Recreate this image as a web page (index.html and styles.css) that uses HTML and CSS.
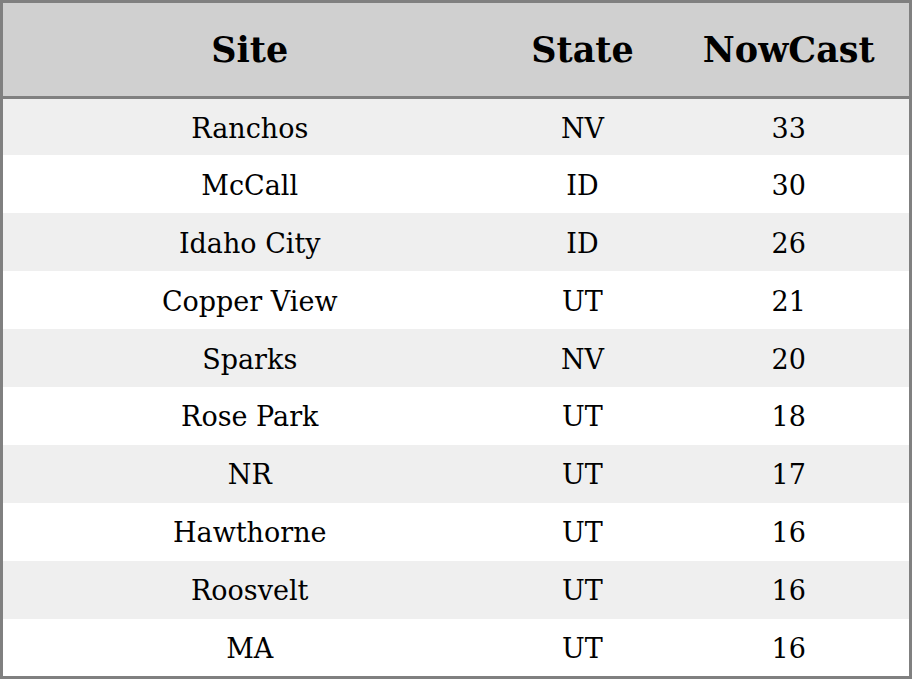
FILE: index.html
```html
<!DOCTYPE html>
<html>
<head>
<meta charset="utf-8">
<link rel="stylesheet" href="styles.css">
</head>
<body>
<table class="aq">
  <colgroup>
    <col class="c-site">
    <col class="c-state">
    <col class="c-now">
  </colgroup>
  <thead>
    <tr><th>Site</th><th>State</th><th>NowCast</th></tr>
  </thead>
  <tbody>
    <tr class="first"><td>Ranchos</td><td>NV</td><td>33</td></tr>
    <tr><td>McCall</td><td>ID</td><td>30</td></tr>
    <tr><td>Idaho City</td><td>ID</td><td>26</td></tr>
    <tr><td>Copper View</td><td>UT</td><td>21</td></tr>
    <tr><td>Sparks</td><td>NV</td><td>20</td></tr>
    <tr><td>Rose Park</td><td>UT</td><td>18</td></tr>
    <tr><td>NR</td><td>UT</td><td>17</td></tr>
    <tr><td>Hawthorne</td><td>UT</td><td>16</td></tr>
    <tr><td>Roosvelt</td><td>UT</td><td>16</td></tr>
    <tr class="last"><td>MA</td><td>UT</td><td>16</td></tr>
  </tbody>
</table>
</body>
</html>
```
FILE: styles.css
```css
html, body {
  margin: 0;
  padding: 0;
  background: #ffffff;
}
.aq {
  width: 912px;
  height: 679px;
  border-collapse: collapse;
  border: 3px solid #808080;
  font-family: "DejaVu Serif", serif;
  color: #000;
  table-layout: fixed;
}
.c-site { width: 495px; }
.c-state { width: 172px; }
.aq th {
  background: #d0d0d0;
  font-size: 35px;
  font-weight: bold;
  height: 93px;
  padding: 0;
  text-align: center;
  border-bottom: 3px solid #808080;
}
.aq td {
  font-size: 27px;
  text-align: center;
  padding: 2px 0 0 0;
  height: 56px;
  box-sizing: border-box;
}
.aq tr.first td { height: 56px; }
.aq tr.last td { height: 57px; }
.aq tbody tr:nth-child(odd) td { background: #efefef; }
.aq tbody tr:nth-child(even) td { background: #ffffff; }
```
